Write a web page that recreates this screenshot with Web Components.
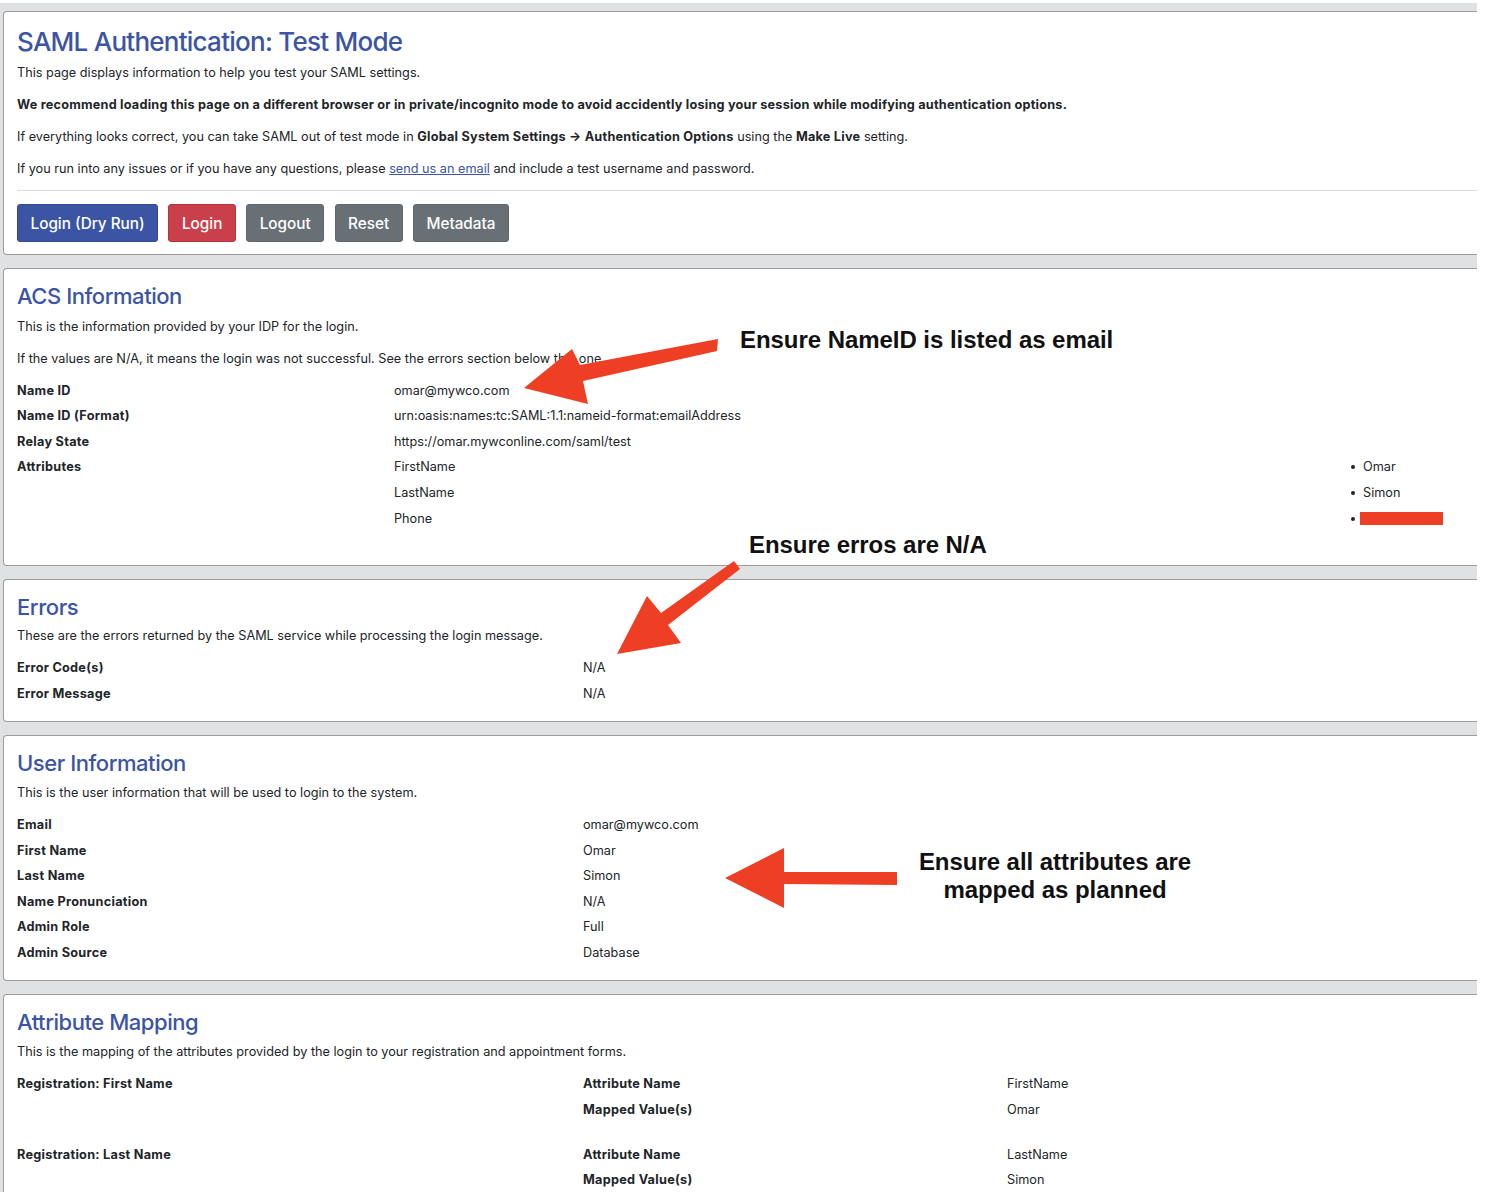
<!DOCTYPE html>
<html>
<head>
<meta charset="utf-8">
<title>SAML Authentication: Test Mode</title>
<style>
  html, body{
    margin: 0;
    height: 1192px;
    overflow: hidden;
    background: #fff;
    font-family: Inter, "Liberation Sans", sans-serif;
    font-size: 12.7px;
    color: #212529;
  }
  a{ color: #3b54a3; }
  b{ letter-spacing: 0.27px; }
</style>
</head>
<body>

<saml-page>
  <saml-card heading="SAML Authentication: Test Mode" big>
    <p-line>This page displays information to help you test your SAML settings.</p-line>
    <p-line><b style="letter-spacing:.21px">We recommend loading this page on a different browser or in private/incognito mode to avoid accidently losing your session while modifying authentication options.</b></p-line>
    <p-line>If everything looks correct, you can take SAML out of test mode in <b style="letter-spacing:.23px">Global System Settings → Authentication Options</b> using the <b style="letter-spacing:.23px">Make Live</b> setting.</p-line>
    <p-line>If you run into any issues or if you have any questions, please <a href="#">send us an email</a> and include a test username and password.</p-line>
    <button-bar>
      <saml-button kind="blue">Login (Dry Run)</saml-button>
      <saml-button kind="red">Login</saml-button>
      <saml-button>Logout</saml-button>
      <saml-button>Reset</saml-button>
      <saml-button>Metadata</saml-button>
    </button-bar>
  </saml-card>

  <saml-card heading="ACS Information" extra>
    <p-line style="margin-top:4.6px">This is the information provided by your IDP for the login.</p-line>
    <p-line>If the values are N/A, it means the login was not successful. See the errors section below this one.</p-line>
    <info-table cols="377px 957px 1fr" style="margin-bottom:4px">
      <b>Name ID</b><span>omar@mywco.com</span><span></span>
      <b>Name ID (Format)</b><span>urn:oasis:names:tc:SAML:1.1:nameid-format:emailAddress</span><span></span>
      <b>Relay State</b><span>https://omar.mywconline.com/saml/test</span><span></span>
      <b>Attributes</b><span>FirstName</span><bullet-item>Omar</bullet-item>
      <span></span><span>LastName</span><bullet-item>Simon</bullet-item>
      <span></span><span>Phone</span><bullet-item hidden-value></bullet-item>
    </info-table>
  </saml-card>

  <saml-card heading="Errors">
    <p-line style="margin-top:-1px">These are the errors returned by the SAML service while processing the login message.</p-line>
    <info-table cols="566px 1fr" style="margin-bottom:5.6px">
      <b>Error Code(s)</b><span>N/A</span>
      <b>Error Message</b><span>N/A</span>
    </info-table>
  </saml-card>

  <saml-card heading="User Information">
    <p-line style="margin-bottom:11.85px">This is the user information that will be used to login to the system.</p-line>
    <info-table cols="566px 1fr" style="margin-bottom:4.75px">
      <b>Email</b><span>omar@mywco.com</span>
      <b>First Name</b><span>Omar</span>
      <b>Last Name</b><span>Simon</span>
      <b>Name Pronunciation</b><span>N/A</span>
      <b>Admin Role</b><span>Full</span>
      <b>Admin Source</b><span>Database</span>
    </info-table>
  </saml-card>

  <saml-card heading="Attribute Mapping">
    <p-line style="margin-bottom:12.3px">This is the mapping of the attributes provided by the login to your registration and appointment forms.</p-line>
    <info-table cols="566px 424px 1fr">
      <b>Registration: First Name</b><b>Attribute Name</b><span>FirstName</span>
      <span></span><b>Mapped Value(s)</b><span>Omar</span>
    </info-table>
    <info-table cols="566px 424px 1fr" style="margin-top:25.1px">
      <b>Registration: Last Name</b><b>Attribute Name</b><span>LastName</span>
      <span></span><b>Mapped Value(s)</b><span>Simon</span>
    </info-table>
  </saml-card>
</saml-page>

<note-layer>
  <note-text style="left:740px;top:326px">Ensure NameID is listed as email</note-text>
  <note-text style="left:749px;top:531px">Ensure erros are N/A</note-text>
  <note-text style="left:905px;top:848px;width:300px;text-align:center">Ensure all attributes are<br>mapped as planned</note-text>
</note-layer>

<script>
class SamlPage extends HTMLElement{
  constructor(){
    super()
    this.attachShadow({mode: 'open'})
    this.shadowRoot.innerHTML = `
      <style>
        :host{
          display: flex;
          flex-direction: column;
          gap: 13px;
          width: 1477px;
          height: 1189px;
          margin-top: 3px;
          padding: 8px 0 0 3px;
          box-sizing: border-box;
          overflow: hidden;
          background: #dfe1e2;
        }
      </style>
      <slot></slot>
    `
  }
}

class SamlCard extends HTMLElement{
  constructor(){
    super()
    this.attachShadow({mode: 'open'})
  }

  connectedCallback(){
    const big = this.hasAttribute('big')
    this.shadowRoot.innerHTML = `
      <style>
        :host{
          display: block;
          flex: none;
          background: #fff;
          border: 1px solid #9a9c9e;
          border-right: 0;
          border-radius: 4px 0 0 4px;
          padding: ${big ? '13px' : '11px'} 0 ${this.hasAttribute('extra') ? '32.4px' : '12px'} 13px;
        }
        h2{
          margin: 0 0 4px;
          font-weight: 500;
          color: #3b54a3;
          font-size: ${big ? '26px' : '22px'};
          line-height: ${big ? '34px' : '32px'};
          letter-spacing: ${big ? '-0.75px' : '-0.45px'};
        }
      </style>
      <h2>${this.getAttribute('heading')}</h2>
      <slot></slot>
    `
  }
}

class PLine extends HTMLElement{
  constructor(){
    super()
    this.attachShadow({mode: 'open'})
    this.shadowRoot.innerHTML = `
      <style>
        :host{
          display: block;
          line-height: 20px;
          margin-bottom: 12px;
        }
      </style>
      <slot></slot>
    `
  }
}

class ButtonBar extends HTMLElement{
  constructor(){
    super()
    this.attachShadow({mode: 'open'})
    this.shadowRoot.innerHTML = `
      <style>
        :host{
          display: flex;
          gap: 10.3px;
          border-top: 1px solid #dcdcdc;
          margin-top: -1px;
          padding-top: 13px;
        }
      </style>
      <slot></slot>
    `
  }
}

class SamlButton extends HTMLElement{
  constructor(){
    super()
    this.attachShadow({mode: 'open'})
  }

  connectedCallback(){
    const colors = {
      blue: ['#3b54a3', '#34498f'],
      red: ['#c9404a', '#b8323c'],
    }
    const [fill, edge] = colors[this.getAttribute('kind')] || ['#687076', '#5f676d']
    this.shadowRoot.innerHTML = `
      <style>
        :host{
          display: block;
          height: 38px;
          line-height: 37px;
          padding: 0 12.5px;
          box-sizing: border-box;
          border: 1px solid ${edge};
          border-radius: 3px;
          color: #fff;
          font-size: 15.3px;
          font-weight: 500;
          background: ${fill};
        }
      </style>
      <slot></slot>
    `
  }
}

class InfoTable extends HTMLElement{
  constructor(){
    super()
    this.attachShadow({mode: 'open'})
  }

  connectedCallback(){
    this.shadowRoot.innerHTML = `
      <style>
        :host{
          display: grid;
          grid-template-columns: ${this.getAttribute('cols')};
          grid-auto-rows: 20px;
          row-gap: 5.6px;
          line-height: 20px;
          margin-bottom: 4.6px;
        }
      </style>
      <slot></slot>
    `
  }
}

class BulletItem extends HTMLElement{
  constructor(){
    super()
    this.attachShadow({mode: 'open'})
  }

  connectedCallback(){
    const redacted = this.hasAttribute('hidden-value')
    this.shadowRoot.innerHTML = `
      <style>
        :host{
          display: flex;
          align-items: center;
          gap: 8px;
        }
        i{
          width: 4px;
          height: 4px;
          border-radius: 50%;
          background: #212529;
        }
        u{
          width: 83px;
          height: 13px;
          margin-left: -3px;
          background: #ee3f24;
        }
      </style>
      <i></i>${redacted ? '<u></u>' : '<slot></slot>'}
    `
  }
}

class NoteLayer extends HTMLElement{
  constructor(){
    super()
    this.attachShadow({mode: 'open'})
    this.shadowRoot.innerHTML = `
      <style>
        :host{
          position: absolute;
          left: 0;
          top: 0;
          width: 1498px;
          height: 1192px;
        }
        svg{
          position: absolute;
          left: 0;
          top: 0;
        }
      </style>
      <svg width="1498" height="1192" viewBox="0 0 1498 1192" fill="#ee3f24">
        <polygon points="718,339 717,351 583,381 588,404 524,388 572,349 580,365"/>
        <polygon points="734,561 740,569 668,625 681,643 617,654 647,596 661,613"/>
        <polygon points="725,878 784,848 784,872 897,872 897,885 784,884 784,908"/>
      </svg>
      <slot></slot>
    `
  }
}

class NoteText extends HTMLElement{
  constructor(){
    super()
    this.attachShadow({mode: 'open'})
    this.shadowRoot.innerHTML = `
      <style>
        :host{
          position: absolute;
          font: bold 24px/28px "Liberation Sans", Arial, sans-serif;
          letter-spacing: -0.05px;
          color: #111;
          white-space: nowrap;
        }
      </style>
      <slot></slot>
    `
  }
}

customElements.define('saml-page', SamlPage)
customElements.define('saml-card', SamlCard)
customElements.define('p-line', PLine)
customElements.define('button-bar', ButtonBar)
customElements.define('saml-button', SamlButton)
customElements.define('info-table', InfoTable)
customElements.define('bullet-item', BulletItem)
customElements.define('note-layer', NoteLayer)
customElements.define('note-text', NoteText)
</script>
</body>
</html>
